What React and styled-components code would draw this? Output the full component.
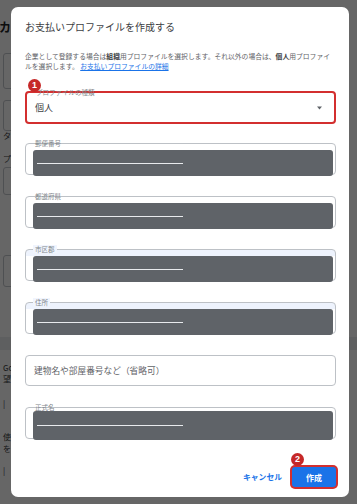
import { createGlobalStyle } from "styled-components";
import styled from "styled-components";

const GlobalStyle = createGlobalStyle`
  html, body {
    margin: 0;
    padding: 0;
    background: #ffffff;
    font-family: "Noto Sans CJK JP", "Noto Sans", sans-serif;
    overflow: hidden;
  }
`;

const Page = styled.div`
  width: 357px;
  height: 504px;
  display: flex;
  flex-direction: column;
  padding-left: 3px;
  box-sizing: border-box;
`;

const PageHeading = styled.div`
  font-size: 12px;
  font-weight: 700;
  color: #202124;
  margin: 20px 0 0 -4px;
  line-height: 14px;
`;

const PageBox = styled.div`
  height: ${(p) => p.h}px;
  margin-top: ${(p) => p.top}px;
  border: 1px solid #c4c7cc;
  border-radius: 3px;
  width: 200px;
  box-sizing: border-box;
`;

const PageText = styled.div`
  font-size: 8px;
  line-height: 10px;
  color: #3c4043;
  margin-top: ${(p) => p.top}px;
`;

const PageBand = styled.div`
  height: 13px;
  margin: ${(p) => p.top}px 0 0 -3px;
  background: #eceef0;
`;

const Overlay = styled.div`
  position: fixed;
  inset: 0;
  background: rgba(0, 0, 0, 0.6);
  display: flex;
  align-items: flex-start;
  padding: 7px 0 0 11px;
`;

const Dialog = styled.div`
  width: 338px;
  height: 490px;
  background: #ffffff;
  border-radius: 7px;
  box-sizing: border-box;
  padding: 13px 13px 10px 14px;
  display: flex;
  flex-direction: column;
`;

const Title = styled.h2`
  margin: 0;
  font-size: 10px;
  line-height: 14px;
  font-weight: 400;
  color: #3c4043;
`;

const Description = styled.p`
  margin: 17px 0 0;
  font-size: 6.8px;
  line-height: 10px;
  color: #5f6368;
  width: 311px;

  b {
    color: #3c4043;
  }

  a {
    color: #1a73e8;
    text-decoration: underline;
  }
`;

const Select = styled.div`
  position: relative;
  margin-top: 20px;
  height: 33px;
  border: 2px solid #d32f2f;
  border-radius: 4px;
  box-sizing: border-box;
  display: flex;
  align-items: center;
  justify-content: space-between;
  padding: 0 12px 0 8px;
`;

const SelectValue = styled.span`
  font-size: 9px;
  color: #3c4043;
`;

const FloatLabel = styled.span`
  position: absolute;
  top: -5px;
  left: 7px;
  font-size: 6.5px;
  line-height: 8px;
  color: #80868b;
  padding: 0 2px;
  background: ${(p) => (p.tint ? "#f1f5fe" : "transparent")};
`;

const Badge = styled.span`
  position: absolute;
  top: ${(p) => p.top}px;
  left: ${(p) => p.left}px;
  width: 13px;
  height: 13px;
  border-radius: 50%;
  background: #c62828;
  color: #ffffff;
  font-family: "Liberation Sans", Arial, sans-serif;
  font-weight: 700;
  font-size: 9px;
  line-height: 13px;
  text-align: center;
`;

const Fields = styled.div`
  margin-top: 19px;
  display: flex;
  flex-direction: column;
  gap: 21px;
`;

const Field = styled.div`
  position: relative;
  height: ${(p) => p.h || 32}px;
  border: 1px solid #bdc1c6;
  border-radius: 4px;
  box-sizing: border-box;
  padding: ${(p) => p.pad ?? 6}px 2px 0 7px;
  display: flex;
  flex-direction: column;
  background: ${(p) =>
    p.tint ? "linear-gradient(#eef3fd 0 6px, #ffffff 6px)" : "#ffffff"};
`;

const Redaction = styled.div`
  flex: 1;
  margin-bottom: -2px;
  background: #5f6368;
  border-radius: 3px;
  display: flex;
  align-items: center;
  padding-left: 4px;
`;

const RedactLine = styled.div`
  width: 146px;
  height: 1px;
  background: #e8eaed;
`;

const Placeholder = styled.div`
  font-size: 8.7px;
  color: #5f6368;
  line-height: 29px;
  margin-top: -6px;
  padding-left: 1px;
`;

const Footer = styled.div`
  margin-top: 28px;
  display: flex;
  justify-content: flex-end;
  align-items: center;
  gap: 10px;
`;

const TextButton = styled.button`
  border: none;
  background: none;
  padding: 0;
  font-family: inherit;
  font-size: 7.8px;
  font-weight: 700;
  color: #1a73e8;
  line-height: 20px;
`;

const PrimaryButton = styled.button`
  position: relative;
  width: 44px;
  height: 20px;
  border: none;
  border-radius: 3px;
  background: #1a73e8;
  color: #ffffff;
  font-family: inherit;
  font-size: 8px;
  font-weight: 700;
  box-shadow: 0 0 0 2px #d32f2f;
  padding: 0;
`;

const Caret = () => (
  <svg width="5" height="4" viewBox="0 0 5 4">
    <path d="M0 0.5 L5 0.5 L2.5 3.5 Z" fill="#5f6368" />
  </svg>
);

const RedactedField = ({ label, tint, pad }) => (
  <Field tint={tint} pad={pad}>
    <FloatLabel tint={tint}>{label}</FloatLabel>
    <Redaction>
      <RedactLine />
    </Redaction>
  </Field>
);

export default function App() {
  return (
    <>
      <GlobalStyle />
      <Page>
        <PageHeading>カ</PageHeading>
        <PageBox top={19} h={36} />
        <PageBox top={11} h={31} />
        <PageText top={0}>タ</PageText>
        <PageText top={13}>プ</PageText>
        <PageBox top={3} h={28} />
        <PageBox top={60} h={32} />
        <PageBand top={50} />
        <PageText top={13}>Go</PageText>
        <PageText top={1}>望</PageText>
        <PageText top={15}>|</PageText>
        <PageText top={23}>使</PageText>
        <PageText top={2}>を</PageText>
        <PageText top={12}>|</PageText>
      </Page>
      <Overlay>
        <Dialog>
          <Title>お支払いプロファイルを作成する</Title>
          <Description>
            企業として登録する場合は<b>組織</b>用プロファイルを選択します。それ以外の場合は、
            <b>個人</b>用プロファイルを選択します。 <a>お支払いプロファイルの詳細</a>
          </Description>
          <Select>
            <FloatLabel>プロファイルの種類</FloatLabel>
            <Badge top={-14} left={1}>1</Badge>
            <SelectValue>個人</SelectValue>
            <Caret />
          </Select>
          <Fields>
            <RedactedField label="郵便番号" />
            <RedactedField label="都道府県" />
            <RedactedField label="市区郡" tint />
            <RedactedField label="住所" tint />
            <Field h={31}>
              <Placeholder>建物名や部屋番号など（省略可）</Placeholder>
            </Field>
            <RedactedField label="正式名" pad={3} />
          </Fields>
          <Footer>
            <TextButton>キャンセル</TextButton>
            <PrimaryButton>
              <Badge top={-14} left={-1}>2</Badge>
              作成
            </PrimaryButton>
          </Footer>
        </Dialog>
      </Overlay>
    </>
  );
}
